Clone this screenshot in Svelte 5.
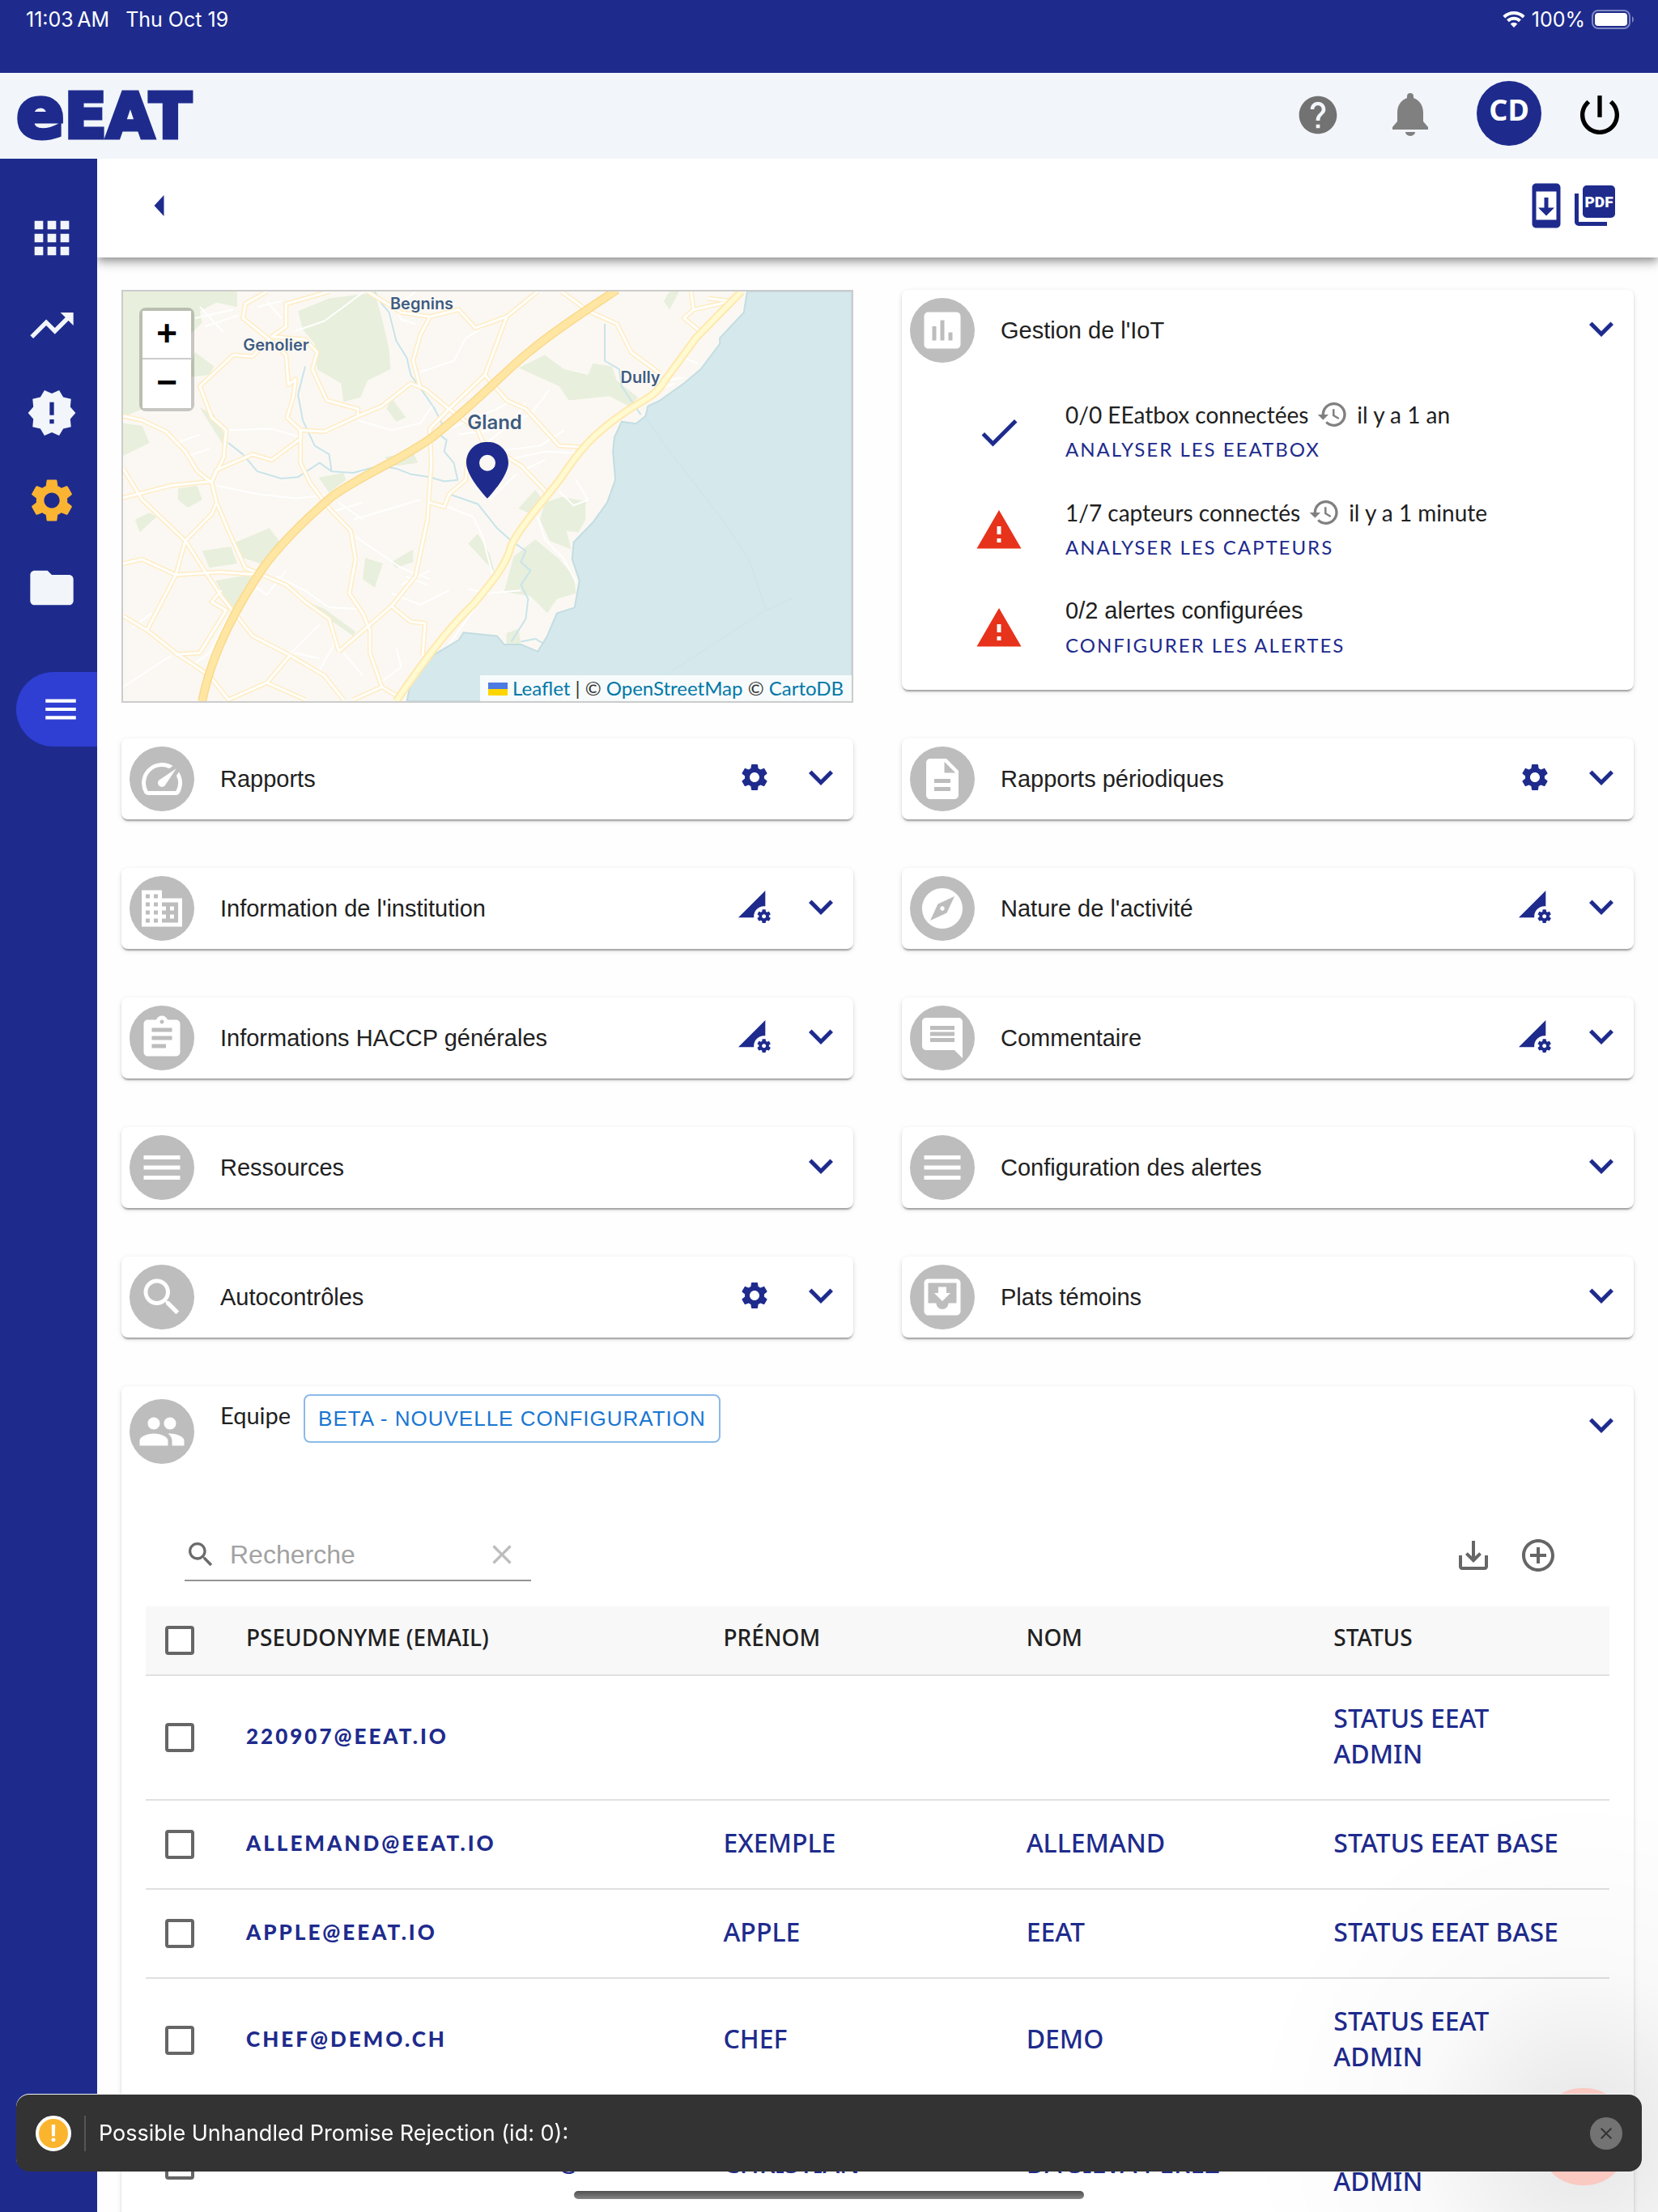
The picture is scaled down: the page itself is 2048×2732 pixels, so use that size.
<script>
  const icons = {
    assessment: 'M19 3H5c-1.1 0-2 .9-2 2v14c0 1.1.9 2 2 2h14c1.1 0 2-.9 2-2V5c0-1.1-.9-2-2-2zM9 17H7v-7h2v7zm4 0h-2V7h2v10zm4 0h-2v-4h2v4z',
    speed: 'M20.38 8.57l-1.23 1.85a8 8 0 0 1-.22 7.58H5.07A8 8 0 0 1 15.58 6.85l1.85-1.23A10 10 0 0 0 3.35 19a2 2 0 0 0 1.72 1h13.85a2 2 0 0 0 1.74-1 10 10 0 0 0-.27-10.44zM10.59 15.41a2 2 0 0 0 2.83 0l5.66-8.49-8.49 5.66a2 2 0 0 0 0 2.83z',
    building: 'M12 7V3H2v18h20V7H12zM6 19H4v-2h2v2zm0-4H4v-2h2v2zm0-4H4V9h2v2zm0-4H4V5h2v2zm4 12H8v-2h2v2zm0-4H8v-2h2v2zm0-4H8V9h2v2zm0-4H8V5h2v2zm10 12h-8v-2h2v-2h-2v-2h2v-2h-2V9h8v10zm-2-8h-2v2h2v-2zm0 4h-2v2h2v-2z',
    clipboard: 'M19 3h-4.18C14.4 1.84 13.3 1 12 1c-1.3 0-2.4.84-2.82 2H5c-1.1 0-2 .9-2 2v14c0 1.1.9 2 2 2h14c1.1 0 2-.9 2-2V5c0-1.1-.9-2-2-2zm-7 0c.55 0 1 .45 1 1s-.45 1-1 1-1-.45-1-1 .45-1 1-1zm2 14H7v-2h7v2zm3-4H7v-2h10v2zm0-4H7V7h10v2z',
    document: 'M14 2H6c-1.1 0-1.99.9-1.99 2L4 20c0 1.1.89 2 1.99 2H18c1.1 0 2-.9 2-2V8l-6-6zm2 16H8v-2h8v2zm0-4H8v-2h8v2zm-3-5V3.5L18.5 9H13z',
    compass: 'M12 10.9c-.61 0-1.1.49-1.1 1.1s.49 1.1 1.1 1.1c.61 0 1.1-.49 1.1-1.1s-.49-1.1-1.1-1.1zM12 2C6.48 2 2 6.48 2 12s4.48 10 10 10 10-4.48 10-10S17.52 2 12 2zm2.19 12.19L6 18l3.81-8.19L18 6l-3.81 8.19z',
    comment: 'M21.99 4c0-1.1-.89-2-1.99-2H4c-1.1 0-2 .9-2 2v12c0 1.1.9 2 2 2h14l4 4-.01-18zM18 14H6v-2h12v2zm0-3H6V9h12v2zm0-3H6V6h12v2z',
    inbox: 'M19 3H4.99c-1.11 0-1.98.9-1.98 2L3 19c0 1.1.88 2 1.99 2H19c1.1 0 2-.9 2-2V5c0-1.1-.9-2-2-2zm0 12h-4c0 1.66-1.35 3-3 3s-3-1.34-3-3H4.99V5H19v10zm-3-5h-2V7h-4v3H8l4 4 4-4z',
    menu: 'M3 18h18v-2H3v2zm0-5h18v-2H3v2zm0-7v2h18V6H3z',
    search: 'M15.5 14h-.79l-.28-.27C15.41 12.59 16 11.11 16 9.5 16 5.91 13.09 3 9.5 3S3 5.91 3 9.5 5.91 16 9.5 16c1.61 0 3.09-.59 4.23-1.57l.27.28v.79l5 4.99L20.49 19l-4.99-5zm-6 0C7.01 14 5 11.99 5 9.5S7.01 5 9.5 5 14 7.01 14 9.5 11.99 14 9.5 14z',
    people: 'M16 11c1.66 0 2.99-1.34 2.99-3S17.66 5 16 5c-1.66 0-3 1.34-3 3s1.34 3 3 3zm-8 0c1.66 0 2.99-1.34 2.99-3S9.66 5 8 5C6.34 5 5 6.34 5 8s1.34 3 3 3zm0 2c-2.33 0-7 1.17-7 3.5V19h14v-2.5c0-2.33-4.67-3.5-7-3.5zm8 0c-.29 0-.62.02-.97.05 1.16.84 1.97 1.97 1.97 3.45V19h6v-2.5c0-2.33-4.67-3.5-7-3.5z',
    history: 'M13 3c-4.97 0-9 4.03-9 9H1l3.89 3.89.07.14L9 12H6c0-3.87 3.13-7 7-7s7 3.13 7 7-3.13 7-7 7c-1.93 0-3.68-.79-4.94-2.06l-1.42 1.42C8.27 19.99 10.51 21 13 21c4.97 0 9-4.03 9-9s-4.03-9-9-9zm-1 5v5l4.28 2.54.72-1.21-3.5-2.08V8H12z',
    gear: 'M19.14 12.94c.04-.3.06-.61.06-.94 0-.32-.02-.64-.07-.94l2.03-1.58c.18-.14.23-.41.12-.61l-1.92-3.32c-.12-.22-.37-.29-.59-.22l-2.39.96c-.5-.38-1.03-.7-1.62-.94l-.36-2.54c-.04-.24-.24-.41-.48-.41h-3.84c-.24 0-.43.17-.47.41l-.36 2.54c-.59.24-1.13.57-1.62.94l-2.39-.96c-.22-.08-.47 0-.59.22L2.74 8.87c-.12.21-.08.47.12.61l2.03 1.58c-.05.3-.09.63-.09.94s.02.64.07.94l-2.03 1.58c-.18.14-.23.41-.12.61l1.92 3.32c.12.22.37.29.59.22l2.39-.96c.5.38 1.03.7 1.62.94l.36 2.54c.05.24.24.41.48.41h3.84c.24 0 .44-.17.47-.41l.36-2.54c.59-.24 1.13-.56 1.62-.94l2.39.96c.22.08.47 0 .59-.22l1.92-3.32c.12-.22.07-.47-.12-.61l-2.01-1.58zM12 15.6c-1.98 0-3.6-1.62-3.6-3.6s1.62-3.6 3.6-3.6 3.6 1.62 3.6 3.6-1.62 3.6-3.6 3.6z',
    dataSetting: 'M18.99 11.5c.34 0 .67.03 1 .07L20 0 0 20h11.56c-.04-.33-.07-.66-.07-1 0-4.14 3.36-7.5 7.5-7.5zm3.71 7.99c.02-.16.04-.32.04-.49 0-.17-.01-.33-.04-.49l1.06-.83c.09-.08.12-.21.06-.32l-1-1.73c-.06-.11-.19-.15-.31-.11l-1.24.5c-.26-.2-.54-.37-.85-.49l-.19-1.32c-.01-.12-.12-.21-.24-.21h-2c-.12 0-.23.09-.25.21l-.19 1.32c-.3.13-.59.29-.85.49l-1.24-.5c-.11-.04-.24 0-.31.11l-1 1.73c-.06.11-.04.24.06.32l1.06.83c-.02.16-.03.32-.03.49 0 .17.01.33.03.49l-1.06.83c-.09.08-.12.21-.06.32l1 1.73c.06.11.19.15.31.11l1.24-.5c.26.2.54.37.85.49l.19 1.32c.02.12.12.21.25.21h2c.12 0 .23-.09.24-.21l.19-1.32c.3-.13.59-.29.84-.49l1.25.5c.11.04.24 0 .31-.11l1-1.73c.06-.11.03-.24-.06-.32l-1.07-.83zm-3.71 1.01c-.83 0-1.5-.67-1.5-1.5s.67-1.5 1.5-1.5 1.5.67 1.5 1.5-.67 1.5-1.5 1.5z',
    chevron: 'M16.59 8.59L12 13.17 7.41 8.59 6 10l6 6 6-6z',
    check: 'M9 16.17L4.83 12l-1.42 1.41L9 19 21 7l-1.41-1.41z',
    warning: 'M1 21h22L12 2 1 21zm12-3h-2v-2h2v2zm0-4h-2v-4h2v4z',
    help: 'M12 2C6.48 2 2 6.48 2 12s4.48 10 10 10 10-4.48 10-10S17.52 2 12 2zm1 17h-2v-2h2v2zm2.07-7.75l-.9.92C13.45 12.9 13 13.5 13 15h-2v-.5c0-1.1.45-2.1 1.17-2.83l1.24-1.26c.37-.36.59-.86.59-1.41 0-1.1-.9-2-2-2s-2 .9-2 2H8c0-2.21 1.79-4 4-4s4 1.79 4 4c0 .88-.36 1.68-.93 2.25z',
    power: 'M13 3h-2v10h2V3zm4.83 2.17l-1.42 1.42C17.99 7.86 19 9.81 19 12c0 3.87-3.13 7-7 7s-7-3.13-7-7c0-2.19 1.01-4.14 2.58-5.42L6.17 5.17C4.23 6.82 3 9.26 3 12c0 4.97 4.03 9 9 9s9-4.03 9-9c0-2.74-1.23-5.18-3.17-6.83z',
    install: 'M17 1.01L7 1c-1.1 0-2 .9-2 2v18c0 1.1.9 2 2 2h10c1.1 0 2-.9 2-2V3c0-1.1-.9-1.99-2-1.99zM17 19H7V5h10v14zm-1-6h-3V8h-2v5H8l4 4 4-4z',
    grid: 'M4 4h4v4H4zM10 4h4v4h-4zM16 4h4v4h-4zM4 10h4v4H4zM10 10h4v4h-4zM16 10h4v4h-4zM4 16h4v4H4zM10 16h4v4h-4zM16 16h4v4h-4z',
    trend: 'M16 6l2.29 2.29-4.88 4.88-4-4L2 16.59 3.41 18l6-6 4 4 6.3-6.29L22 12V6z',
    badge: 'M23 12l-2.44-2.78.34-3.68-3.61-.82-1.89-3.18L12 3 8.6 1.54 6.71 4.72l-3.61.81.34 3.68L1 12l2.44 2.78-.34 3.69 3.61.82 1.89 3.18L12 21l3.4 1.46 1.89-3.18 3.61-.82-.34-3.68L23 12zm-10 5h-2v-2h2v2zm0-4h-2V7h2v6z',
    folder: 'M10 4H4c-1.1 0-1.99.9-1.99 2L2 18c0 1.1.9 2 2 2h16c1.1 0 2-.9 2-2V8c0-1.1-.9-2-2-2h-8l-2-2z',
    clear: 'M19 6.41L17.59 5 12 10.59 6.41 5 5 6.41 10.59 12 5 17.59 6.41 19 12 13.41 17.59 19 19 17.59 13.41 12z',
    download: 'M19 12v7H5v-7H3v7c0 1.1.9 2 2 2h14c1.1 0 2-.9 2-2v-7h-2zm-6 .67l2.59-2.58L17 11.5l-5 5-5-5 1.41-1.41L11 12.67V3h2z',
    add: 'M13 7h-2v4H7v2h4v4h2v-4h4v-2h-4V7zm-1-5C6.48 2 2 6.48 2 12s4.48 10 10 10 10-4.48 10-10S17.52 2 12 2zm0 18c-4.41 0-8-3.59-8-8s3.59-8 8-8 8 3.59 8 8-3.59 8-8 8z'
  };

  const navItems = [
    { icon: 'grid', label: 'Tableau de bord' },
    { icon: 'trend', label: 'Statistiques' },
    { icon: 'badge', label: 'Alertes' },
    { icon: 'gear', label: 'Configuration', active: true },
    { icon: 'folder', label: 'Documents' }
  ];

  const iotRows = [
    { icon: 'check', text: '0/0 EEatbox connectées', since: 'il y a 1 an', link: 'Analyser les EEatbox' },
    { icon: 'warning', text: '1/7 capteurs connectés', since: 'il y a 1 minute', link: 'Analyser les capteurs' },
    { icon: 'warning', text: '0/2 alertes configurées', link: 'Configurer les alertes' }
  ];

  const panels = [
    { icon: 'speed', title: 'Rapports', action: 'gear' },
    { icon: 'document', title: 'Rapports périodiques', action: 'gear' },
    { icon: 'building', title: "Information de l'institution", action: 'dataSetting' },
    { icon: 'compass', title: "Nature de l'activité", action: 'dataSetting' },
    { icon: 'clipboard', title: 'Informations HACCP générales', action: 'dataSetting' },
    { icon: 'comment', title: 'Commentaire', action: 'dataSetting' },
    { icon: 'menu', title: 'Ressources' },
    { icon: 'menu', title: 'Configuration des alertes' },
    { icon: 'search', title: 'Autocontrôles', action: 'gear' },
    { icon: 'inbox', title: 'Plats témoins' }
  ];

  const members = [
    { email: '220907@eeat.io', first: '', last: '', status: 'Status EEat admin' },
    { email: 'allemand@eeat.io', first: 'Exemple', last: 'Allemand', status: 'Status EEat base' },
    { email: 'apple@eeat.io', first: 'Apple', last: 'EEat', status: 'Status EEat base' },
    { email: 'chef@demo.ch', first: 'Chef', last: 'Demo', status: 'Status EEat admin' },
    { email: 'christiandasilvaperez@eeat.io', first: 'Christian', last: 'Da Silva Perez', status: 'Status EEat admin' }
  ];

  const places = [
    { name: 'Begnins', x: 41, y: 3 },
    { name: 'Genolier', x: 21, y: 13 },
    { name: 'Dully', x: 71, y: 21 },
    { name: 'Gland', x: 51, y: 32, big: true }
  ];

  const woods = [
    'M20 56H258V110L215 95 180 125 185 165 165 200 130 225 120 330 60 470 20 500z',
    'M385 125L450 80 545 60 560 150 575 260 578 330 530 370 515 430 480 445 475 380 425 330 420 240 395 190z',
    'M170 270L210 320 200 350 150 360z',
    'M20 520L60 530 75 590 20 635z',
    'M45 860L75 835 90 850 55 905z',
    'M135 750L175 740 185 790 155 818 135 790z',
    'M255 940L325 890 350 945 315 1020 262 990z',
    'M185 970L245 955 258 1015 200 1030z',
    'M213 1075L285 1055 290 1075 250 1190z',
    'M428 712L480 695 485 720 450 765z',
    'M525 995L562 1015 545 1100 520 1070z',
    'M580 430L610 500 590 515 570 470z',
    'M565 640L625 620 635 660 590 670z',
    'M845 325L900 280 940 330 990 350 1000 310 1040 320 1050 370 1095 430 1075 460 1035 425 950 440 930 390z',
    'M1160 56H1180L1160 120 1148 90z',
    'M845 820L880 755 895 790 870 840z',
    'M900 800L935 780 985 795 985 860 970 905 945 900 955 965 910 935 890 860z',
    'M740 945L760 910 785 980 795 1045z',
    'M835 990L880 930 930 1000 960 1060 965 1120 925 1140 905 1190 870 1130 815 1115z',
    'M580 1010L625 965 625 1010 590 1030z',
    'M820 1260L845 1245 850 1300 820 1300z',
    'M180 465L210 490 240 590 230 600z',
    'M390 1140L440 1175 505 1255 500 1270z'
  ];

  const streams = [
    'M545 56L560 100 575 130 590 230 612 290 620 350 650 420 670 470 685 520 680 560 695 580 690 620 710 660 718 720 690 725 660 710 620 700 590 680 555 670 500 695 455 690 430 660 385 710 350 715 300 690 270 630 240 590',
    'M400 320L385 420 395 510 420 600 450 630 455 690',
    'M700 770L760 805 800 890 830 935 860 970 850 1010 870 1040 850 1090 865 1140 860 1210 830 1290',
    'M1025 170L1025 300 1055 330 1060 390 1100 490',
    'M850 1290L880 1280 895 1295'
  ];

  const streets = [
    'M380 195L440 160 520 60', 'M630 170L600 155 590 110 630 56', 'M780 175L735 220 710 300 640 340',
    'M510 510L580 545 640 520 665 460', 'M240 545L330 540 390 570', 'M215 740L300 770 380 785 440 775',
    'M505 920L600 1030 660 1070', 'M500 860L560 830 640 790', 'M690 810L750 850 770 920 790 1050',
    'M885 850L900 930 940 1000 965 1080', 'M760 560L870 490 910 400', 'M770 600L830 520 860 450',
    'M790 620L890 600 940 545', 'M820 650L900 620 970 625', 'M850 690L900 650', 'M700 540L800 470 830 440',
    'M720 560L850 530', 'M840 700L785 790', 'M340 1060L400 1110 450 1170 510 1175', 'M360 1040L320 1125 290 1090',
    'M370 1330L430 1230', 'M350 1370L380 1330 430 1350', 'M430 1390L460 1300 450 1230', 'M480 1330L520 1410',
    'M580 1120L640 1160 700 1110', 'M600 1090L660 1040', 'M610 1060L655 1090', 'M560 1430L600 1380 590 1310',
    'M20 1450L120 1340', 'M40 1240L80 1190', 'M180 110L230 200', 'M170 150L250 120', 'M190 180L260 140',
    'M320 90L350 150', 'M300 110L350 90', 'M120 560L160 650', 'M130 590L180 560', 'M150 640L200 610',
    'M470 800L520 860', 'M460 830L520 800', 'M780 1110L700 1300', 'M850 1110L780 1120 740 1105',
    'M930 760L960 810 990 790 965 720', 'M1140 400L1170 380', 'M1150 370L1190 360', 'M1190 290L1220 310', 'M240 1200L200 1330 160 1380'
  ];

  const roads = [
    'M20 495L60 510 110 550 150 620 175 690 205 730 215 800 240 900 275 1030 310 1055 360 1090 400 1150 450 1210 470 1325',
    'M20 680L60 790 150 935 190 1040 225 1130 290 1270 370 1340 440 1410 480 1495',
    'M20 783L120 740 205 725 215 685 290 630 330 650 390 575 390 545 440 550 510 495 560 460 620 380 650 400 700 470 760 545 770 585 850 670 910 775',
    'M320 56L275 100 270 150 325 225 360 280 365 385 380 365 375 430 362 500 390 545 390 660 410 730 450 820 495 900 505 1000 492 1120 520 1190 535 1250 535 1330 560 1450',
    'M450 56L360 100 360 180 330 215 400 225 425 270 415 330 445 440 510 470 510 495',
    'M325 225L290 285 250 280 180 390 205 500 235 545 230 640 205 725',
    'M530 56L600 130 660 145 640 210 625 300 640 395',
    'M660 145L720 120 755 185 820 145 885 56',
    'M820 145L775 350 700 470 660 540 663 660 655 860 630 1060 580 1165 470 1325',
    'M775 350L820 440 860 470 930 600 985 605',
    'M935 56L990 125 1050 170 1080 270 1140 345',
    'M1240 80L1290 90 1210 120 1190 150 1230 205', 'M1210 120L1205 56',
    'M20 1015L60 1000 130 1055 220 1045 310 1055',
    'M150 935L130 1055 70 1250 130 1330 200 1410 240 1495',
    'M20 1200L70 1250', 'M130 1335L180 1330 235 1180 205 1150 225 1110',
    'M215 800L205 840 150 935', 'M240 1495L320 1435 370 1335', 'M320 1435L400 1495',
    'M580 1165L620 1220 650 1225 645 1340', 'M660 800L690 815 700 770 735 720 740 640',
    'M500 1495L560 1450 590 1480'
  ];

  const motorway = 'M185 1500C205 1330 260 1160 310 1035C350 940 400 860 455 780C520 700 600 650 665 570C770 430 820 330 870 265C930 180 990 120 1050 50';
  const mainRoad = 'M590 1500C650 1350 700 1240 750 1160C790 1080 820 1020 830 950C850 880 900 790 935 710C970 620 1000 560 1060 490C1100 440 1130 430 1150 370L1215 220 1310 56';
  const lake = 'M1322 56L1315 130 1265 220 1265 240 1225 330 1190 380 1140 440 1115 460 1110 495 1090 522 1060 515 1045 570 1042 620 1047 720 1030 800 1000 870 960 940 957 1000 972 1075 962 1170 925 1190 905 1270 885 1325 850 1300 815 1300 800 1270 730 1258 720 1285 655 1350 625 1400 612 1500H1540V56z';
</script>

{#snippet icon(name)}
  <svg class="icon" viewBox="0 0 24 24" aria-hidden="true"><path d={icons[name]} /></svg>
{/snippet}

<div class="app">
  <div class="status-bar">
    <span>11:03&thinsp;AM</span>
    <span>Thu Oct 19</span>
    <svg class="wifi" viewBox="0 0 28 20" aria-hidden="true">
      <path d="M14 20l4.300-4.400a6.200 6.200 0 0 0-8.600 0z" />
      <path class="arc" d="M6.500 11.800a10.800 10.800 0 0 1 15 0M1.800 7a17.500 17.500 0 0 1 24.400 0" />
    </svg>
    <span class="charge">100%</span>
    <svg class="battery" viewBox="0 0 54 24" aria-hidden="true">
      <rect class="shell" x="1" y="1" width="46" height="22" rx="7" />
      <rect x="4" y="4" width="40" height="16" rx="4" />
      <path class="tip" d="M50 8a5 5 0 0 1 0 8z" />
    </svg>
  </div>

  <header class="header">
    <a class="logo" href="#home"><span>e</span>EAT</a>
    <button class="plain help" type="button" aria-label="Aide">{@render icon('help')}</button>
    <button class="plain bell" type="button" aria-label="Notifications">
      <svg class="icon" viewBox="0 0 60 60" aria-hidden="true">
        <path d="M14 38V27C14 17 20 11 26 9V7a4 4 0 0 1 8 0v2c6 2 12 8 12 18v11l6 7v3H8v-3zM24 51h12a6 5 0 0 1-12 0z" />
      </svg>
    </button>
    <button class="avatar" type="button">CD</button>
    <button class="plain power" type="button" aria-label="Se déconnecter">{@render icon('power')}</button>
  </header>

  <div class="body">
    <nav class="sidebar">
      {#each navItems as item}
        <a href="#{item.icon}" class:active={item.active} aria-label={item.label}>{@render icon(item.icon)}</a>
      {/each}
      <button class="menu-toggle" type="button" aria-label="Menu">{@render icon('menu')}</button>
    </nav>

    <main class="main">
      <div class="toolbar">
        <button class="plain back" type="button" aria-label="Retour">
          <svg viewBox="0 0 12 26" aria-hidden="true"><path d="M12 0v26L0 13z" /></svg>
        </button>
        <button class="plain" type="button" aria-label="Installer">{@render icon('install')}</button>
        <button class="plain" type="button" aria-label="Exporter en PDF">
          <svg class="icon" viewBox="0 0 60 60" aria-hidden="true">
            <path d="M20 5h30a5 5 0 0 1 5 5v30a5 5 0 0 1-5 5H20a5 5 0 0 1-5-5V10a5 5 0 0 1 5-5zM5 15h5v35h35v5H10a5 5 0 0 1-5-5z" />
            <text x="35" y="32" text-anchor="middle">PDF</text>
          </svg>
        </button>
      </div>

      <div class="content">
        <div class="grid">
          <div class="map">
            <svg class="tiles" viewBox="20 56 1520 1444" preserveAspectRatio="none" aria-hidden="true">
              {#each woods as d}<path class="wood" {d} />{/each}
              {#each streams as d}<path class="stream" {d} />{/each}
              {#each streets as d}<path class="street" {d} />{/each}
              {#each roads as d}<path class="road-edge" {d} />{/each}
              {#each roads as d}<path class="road" {d} />{/each}
              <path class="lake" d={lake} />
              <path class="ferry" d="M1110 500C1180 680 1290 880 1330 1020L1362 1178 1415 1140M1362 1178L1150 1410" />
              <path class="motorway-edge" d={motorway} />
              <path class="motorway" d={motorway} />
              <path class="main-edge" d={mainRoad} />
              <path class="main-road" d={mainRoad} />
            </svg>
            {#each places as place}
              <span class="place" class:big={place.big} style="left: {place.x}%; top: {place.y}%">{place.name}</span>
            {/each}
            <svg class="pin" viewBox="0 0 52 70" aria-hidden="true">
              <path d="M26 0C11 0 0 11 0 26c0 17 26 44 26 44s26-27 26-44C52 11 41 0 26 0zm0 36a10 10 0 1 1 0-20 10 10 0 0 1 0 20z" />
            </svg>
            <div class="zoom">
              <button type="button" aria-label="Zoom avant">+</button>
              <button type="button" aria-label="Zoom arrière">−</button>
            </div>
            <div class="attribution">
              <svg viewBox="0 0 24 16" aria-hidden="true"><path fill="#4c7be1" d="M0 0h24v8H0z" /><path fill="#ffd500" d="M0 8h24v8H0z" /></svg>
              <a href="#leaflet">Leaflet</a> | © <a href="#osm">OpenStreetMap</a> © <a href="#carto">CartoDB</a>
            </div>
          </div>

          <section class="card">
            <div class="card-head">
              <span class="bubble">{@render icon('assessment')}</span>
              <h2>Gestion de l'IoT</h2>
              <button class="plain chevron" type="button" aria-label="Replier">{@render icon('chevron')}</button>
            </div>
            <ul class="iot">
              {#each iotRows as row}
                <li>
                  <span class="state {row.icon}">{@render icon(row.icon)}</span>
                  <div>
                    <p class:humanist={row.since}>
                      {row.text}
                      {#if row.since}
                        {@render icon('history')}
                        {row.since}
                      {/if}
                    </p>
                    <a href="#iot">{row.link}</a>
                  </div>
                </li>
              {/each}
            </ul>
          </section>

          {#each panels as panel}
            <section class="card">
              <div class="card-head">
                <span class="bubble">{@render icon(panel.icon)}</span>
                <h2>{panel.title}</h2>
                {#if panel.action}
                  <button class="plain action" type="button" aria-label="Paramètres">{@render icon(panel.action)}</button>
                {/if}
                <button class="plain chevron" type="button" aria-label="Déplier">{@render icon('chevron')}</button>
              </div>
            </section>
          {/each}
        </div>

        <section class="card team">
          <div class="team-head">
            <span class="bubble">{@render icon('people')}</span>
            <h2>Equipe</h2>
            <button class="beta" type="button">Beta - Nouvelle configuration</button>
            <button class="plain chevron" type="button" aria-label="Replier">{@render icon('chevron')}</button>
          </div>

          <div class="table-tools">
            <label class="search">
              {@render icon('search')}
              <input type="text" placeholder="Recherche" aria-label="Recherche" />
              <button class="plain" type="button" aria-label="Effacer">{@render icon('clear')}</button>
            </label>
            <button class="plain tool" type="button" aria-label="Exporter">{@render icon('download')}</button>
            <button class="plain tool" type="button" aria-label="Ajouter">{@render icon('add')}</button>
          </div>

          <table>
            <colgroup>
              <col class="col-check" />
              <col class="col-email" />
              <col class="col-first" />
              <col class="col-last" />
              <col />
            </colgroup>
            <thead>
              <tr>
                <th><input type="checkbox" aria-label="Tout sélectionner" /></th>
                <th>Pseudonyme (email)</th>
                <th>Prénom</th>
                <th>Nom</th>
                <th>Status</th>
              </tr>
            </thead>
            <tbody>
              {#each members as member}
                <tr>
                  <td><input type="checkbox" aria-label={member.email} /></td>
                  <td class="email">{member.email}</td>
                  <td>{member.first}</td>
                  <td>{member.last}</td>
                  <td>{member.status}</td>
                </tr>
              {/each}
            </tbody>
          </table>
        </section>
      </div>
    </main>
  </div>

  <div class="fab"></div>

  <div class="toast" role="alert">
    <span class="toast-icon">!</span>
    <p>Possible Unhandled Promise Rejection (id: 0):</p>
    <button type="button" aria-label="Fermer">{@render icon('clear')}</button>
  </div>
  <div class="home-indicator"></div>
</div>

<style>
  :global(body) {
    background: #fefefe;
  }

  .app {
    --navy: #1e2b8d;
    color: #212121;
    display: flex;
    flex-direction: column;
    font: 28px/40px 'Liberation Sans', Arial, sans-serif;
    height: 100vh;
    overflow: hidden;
  }

  .app *,
  .app *::before {
    box-sizing: border-box;
  }

  button,
  input {
    font: inherit;
    margin: 0;
  }

  a {
    text-decoration: none;
  }

  h2,
  p {
    font-size: 29px;
    font-weight: 400;
    margin: 0;
  }

  .icon {
    display: block;
    fill: currentColor;
    flex: none;
    height: 60px;
    width: 60px;
  }

  .plain {
    background: none;
    border: 0;
    color: var(--navy);
    flex: none;
    padding: 0;
  }

  .status-bar {
    align-items: flex-start;
    background: var(--navy);
    color: #fff;
    display: flex;
    flex: none;
    font: 25px/24px Inter, sans-serif;
    gap: 20px;
    height: 90px;
    padding: 12px 28px 0 32px;
  }

  .wifi {
    fill: #fff;
    height: 20px;
    margin: 2px -12px 0 auto;
    width: 28px;
  }

  .wifi .arc {
    fill: none;
    stroke: #fff;
    stroke-width: 4;
  }

  .charge {
    margin-right: -12px;
  }

  .battery {
    fill: #fff;
    height: 24px;
    width: 54px;
  }

  .battery .shell {
    fill: none;
    stroke: #8189c0;
    stroke-width: 2;
  }

  .battery .tip {
    fill: #8189c0;
  }

  .header {
    align-items: center;
    background: #f2f5fa;
    display: flex;
    flex: none;
    height: 106px;
    padding: 0 40px 2px 20px;
  }

  .logo {
    color: var(--navy);
    font: 700 76px/76px 'DejaVu Sans', sans-serif;
    margin-right: auto;
    -webkit-text-stroke: 5px var(--navy);
  }

  .logo span {
    font-size: 88px;
  }

  .help {
    color: #727272;
  }

  .help .icon {
    height: 56px;
    width: 56px;
  }

  .bell {
    color: #808080;
    margin: 0 52px 0 56px;
  }

  .avatar {
    background: var(--navy);
    border: 0;
    border-radius: 50%;
    color: #fff;
    font: 700 36px/72px 'Noto Sans', sans-serif;
    height: 80px;
    margin: 0 40px 4px 0;
    padding: 0 0 8px;
    width: 80px;
  }

  .power {
    color: #000;
  }

  .power .icon {
    height: 64px;
    width: 64px;
  }

  .body {
    display: flex;
    flex: 1;
    min-height: 0;
  }

  .sidebar {
    align-items: center;
    background: var(--navy);
    display: flex;
    flex: none;
    flex-direction: column;
    gap: 44px;
    padding: 66px 0 0 8px;
    width: 120px;
  }

  .sidebar a {
    color: #f2f5fa;
  }

  .sidebar a.active {
    color: #fbb432;
  }

  .sidebar .icon {
    height: 64px;
    width: 64px;
  }

  .menu-toggle {
    align-self: flex-end;
    background: #2f3fd3;
    border: 0;
    border-radius: 46px 0 0 46px;
    color: #fff;
    height: 92px;
    margin-top: 28px;
    padding: 0 0 0 30px;
    width: 100px;
  }

  .menu-toggle .icon {
    height: 50px;
    width: 50px;
  }

  .main {
    display: flex;
    flex: 1;
    flex-direction: column;
    min-width: 0;
  }

  .toolbar {
    align-items: center;
    background: #fff;
    box-shadow: 0 4px 8px -2px rgba(0, 0, 0, 0.25),
      0 8px 10px rgba(0, 0, 0, 0.16),
      0 2px 20px rgba(0, 0, 0, 0.14);
    clip-path: inset(0 0 -40px 0);
    display: flex;
    flex: none;
    height: 122px;
    padding: 0 48px 6px 70px;
    position: relative;
  }

  .toolbar text {
    fill: #fff;
    font: 900 19px Roboto, sans-serif;
  }

  .back {
    margin-right: auto;
  }

  .back svg {
    display: block;
    fill: currentColor;
    height: 26px;
    width: 13px;
  }

  .content {
    flex: 1;
    min-height: 0;
    padding: 40px 30px;
  }

  .grid {
    display: grid;
    gap: 60px;
    grid-template-columns: 1fr 1fr;
    margin-bottom: 60px;
  }

  .map {
    background: #fbf8f3;
    border: 2px solid #ccc;
    height: 510px;
    margin-bottom: -16px;
    overflow: hidden;
    position: relative;
  }

  .tiles {
    display: block;
    height: 100%;
    width: 100%;
  }

  .tiles path {
    fill: none;
    stroke-linejoin: round;
    vector-effect: non-scaling-stroke;
  }

  .tiles .wood {
    fill: #e8efdc;
  }

  .tiles .lake {
    fill: #d5e8eb;
    stroke: #c3dde2;
    stroke-width: 2px;
  }

  .tiles .ferry {
    stroke: #cbe5ea;
    stroke-width: 1px;
  }

  .tiles .stream {
    stroke: #c8e4ea;
    stroke-width: 2px;
  }

  .tiles .street {
    stroke: #fff;
    stroke-width: 2px;
  }

  .tiles .road-edge {
    stroke: #ffecc2;
    stroke-width: 6px;
  }

  .tiles .road {
    stroke: #fff;
    stroke-width: 3px;
  }

  .tiles .motorway-edge {
    stroke: #fad98c;
    stroke-width: 11px;
  }

  .tiles .motorway {
    stroke: #ffe6a3;
    stroke-width: 8px;
  }

  .tiles .main-edge {
    stroke: #ffe8b0;
    stroke-width: 10px;
  }

  .tiles .main-road {
    stroke: #fffad0;
    stroke-width: 6px;
  }

  .place {
    color: #405c7e;
    font: 600 20px/24px Inter, sans-serif;
    position: absolute;
    text-shadow: 0 0 3px #fff, 0 0 3px #fff;
    transform: translate(-50%, -50%);
  }

  .place.big {
    font-size: 24px;
  }

  .pin {
    fill: var(--navy);
    height: 70px;
    left: 50%;
    position: absolute;
    top: 50%;
    transform: translate(-50%, -96%);
    width: 52px;
  }

  .zoom {
    background-clip: padding-box;
    border: 4px solid rgba(0, 0, 0, 0.2);
    border-radius: 8px;
    left: 20px;
    position: absolute;
    top: 20px;
  }

  .zoom button {
    background: #fff;
    border: 0;
    color: #000;
    display: block;
    font: 700 44px/56px 'Liberation Sans', sans-serif;
    height: 60px;
    padding: 0 0 4px;
    width: 60px;
  }

  .zoom button:first-child {
    border-bottom: 2px solid #ccc;
  }

  .attribution {
    background: rgba(255, 255, 255, 0.8);
    bottom: 0;
    color: #333;
    font: 24px/32px Lato, sans-serif;
    padding: 0 10px;
    position: absolute;
    right: 0;
  }

  .attribution a {
    color: #0078a8;
  }

  .attribution svg {
    height: 16px;
    width: 24px;
  }

  .card {
    background: #fff;
    border-radius: 8px;
    box-shadow: 0 4px 2px -2px rgba(0, 0, 0, 0.2),
      0 2px 2px rgba(0, 0, 0, 0.14),
      0 2px 6px rgba(0, 0, 0, 0.12);
  }

  .card-head {
    align-items: center;
    display: flex;
    height: 100px;
    padding: 0 10px;
  }

  .card-head h2 {
    flex: 1;
  }

  .bubble {
    background: #bdbdbd;
    border-radius: 50%;
    color: #fff;
    flex: none;
    height: 80px;
    margin-right: 32px;
    padding: 10px;
    width: 80px;
  }

  .action {
    margin: 0 32px 4px;
  }

  .action .icon {
    height: 40px;
    width: 40px;
  }

  .chevron {
    margin-bottom: 4px;
  }

  .iot {
    list-style: none;
    margin: 0;
    padding: 15px 0 16px 90px;
  }

  .iot li {
    align-items: center;
    display: flex;
    gap: 52px;
    height: 121px;
  }

  .iot p {
    align-items: center;
    display: flex;
    gap: 10px;
    line-height: 42px;
  }

  .iot p .icon {
    color: #808080;
    height: 40px;
    width: 40px;
  }

  .iot a {
    color: var(--navy);
    display: block;
    font: 24px/44px Lato, sans-serif;
    letter-spacing: 2px;
    text-transform: uppercase;
  }

  .iot .humanist {
    font-family: Lato, sans-serif;
    font-size: 28px;
  }

  .check {
    color: var(--navy);
  }

  .warning {
    color: #e7321c;
  }

  .team-head {
    align-items: flex-start;
    display: flex;
    height: 150px;
    padding: 10px;
  }

  .team-head .bubble {
    margin-top: 6px;
  }

  .team-head h2 {
    font-family: Lato, sans-serif;
    line-height: 52px;
    margin-right: 16px;
  }

  .team-head .chevron {
    margin: 8px 0 0 auto;
  }

  .beta {
    background: #fff;
    border: 2px solid #8cbae8;
    border-radius: 8px;
    color: #1976d2;
    font-size: 26px;
    height: 60px;
    letter-spacing: 1px;
    padding: 0 16px;
    text-transform: uppercase;
  }

  .table-tools {
    align-items: center;
    display: flex;
    gap: 32px;
    height: 122px;
    padding: 0 94px 4px 78px;
  }

  .search {
    align-items: center;
    border-bottom: 2px solid #949494;
    color: #6b6b6b;
    display: flex;
    height: 64px;
    margin-right: auto;
    width: 428px;
  }

  .search .icon {
    height: 40px;
    width: 40px;
  }

  .search input {
    background: none;
    border: 0;
    flex: 1;
    font-size: 32px;
    min-width: 0;
    outline: 0;
    padding: 0 16px;
  }

  .search input::placeholder {
    color: #a2a2a2;
  }

  .search button {
    color: #bdbdbd;
    margin-right: 16px;
  }

  .tool {
    color: #666;
  }

  .tool .icon {
    height: 48px;
    width: 48px;
  }

  table {
    border-collapse: collapse;
    margin: 0 30px;
    table-layout: fixed;
    width: calc(100% - 60px);
  }

  .col-check {
    width: 92px;
  }

  .col-email {
    width: 32.6%;
  }

  .col-first {
    width: 20.7%;
  }

  .col-last {
    width: 21%;
  }

  th,
  td {
    border-bottom: 2px solid #e0e0e0;
    padding: 30px 32px 34px;
    text-align: left;
    text-transform: uppercase;
  }

  th {
    background: #f8f8f8;
    font: 500 28px/36px 'Noto Sans', sans-serif;
    padding: 20px 32px 28px;
  }

  td {
    color: var(--navy);
    font: 500 32px/44px 'Noto Sans', sans-serif;
  }

  td:last-child {
    padding-right: 48px;
  }

  th:first-child,
  td:first-child {
    padding: 0 0 0 24px;
  }

  td.email {
    font: 900 26px/44px Lato, sans-serif;
    letter-spacing: 3px;
  }

  table input {
    appearance: none;
    background: #fff;
    border: 4px solid #666;
    border-radius: 4px;
    display: block;
    height: 36px;
    width: 36px;
  }

  .fab {
    bottom: 33px;
    height: 120px;
    position: fixed;
    right: 38px;
    width: 108px;
  }

  /* soft glow around the button */
  .fab::before {
    background: radial-gradient(closest-side, rgba(0, 0, 0, 0.1), rgba(0, 0, 0, 0.02) 50%, transparent);
    content: '';
    inset: -360px;
    pointer-events: none;
    position: absolute;
  }

  .fab::after {
    background: #f9c9c2;
    border-radius: 52px;
    content: '';
    inset: 0;
    position: absolute;
  }

  .toast {
    align-items: center;
    background: #333;
    border-radius: 16px;
    bottom: 50px;
    box-shadow: 0 -1px #f4f4f4;
    color: #fff;
    display: flex;
    height: 95px;
    left: 20px;
    padding: 0 24px;
    position: fixed;
    right: 20px;
  }

  .toast-icon {
    background: #fbb42e;
    border: 4px solid #fff;
    border-radius: 50%;
    font: 700 28px/36px Inter, sans-serif;
    height: 44px;
    text-align: center;
    width: 44px;
  }

  .toast p {
    border-left: 2px solid #555;
    flex: 1;
    font: 27px/44px Inter, sans-serif;
    margin-left: 16px;
    padding-left: 16px;
  }

  .toast button {
    background: #737373;
    border: 0;
    border-radius: 50%;
    color: #333;
    height: 40px;
    padding: 8px;
    width: 40px;
  }

  .toast button .icon {
    height: 24px;
    width: 24px;
  }

  .home-indicator {
    background: linear-gradient(#505050, #858585);
    border-radius: 5px;
    bottom: 16px;
    height: 10px;
    left: 50%;
    position: fixed;
    transform: translateX(-50%);
    width: 630px;
  }
</style>
